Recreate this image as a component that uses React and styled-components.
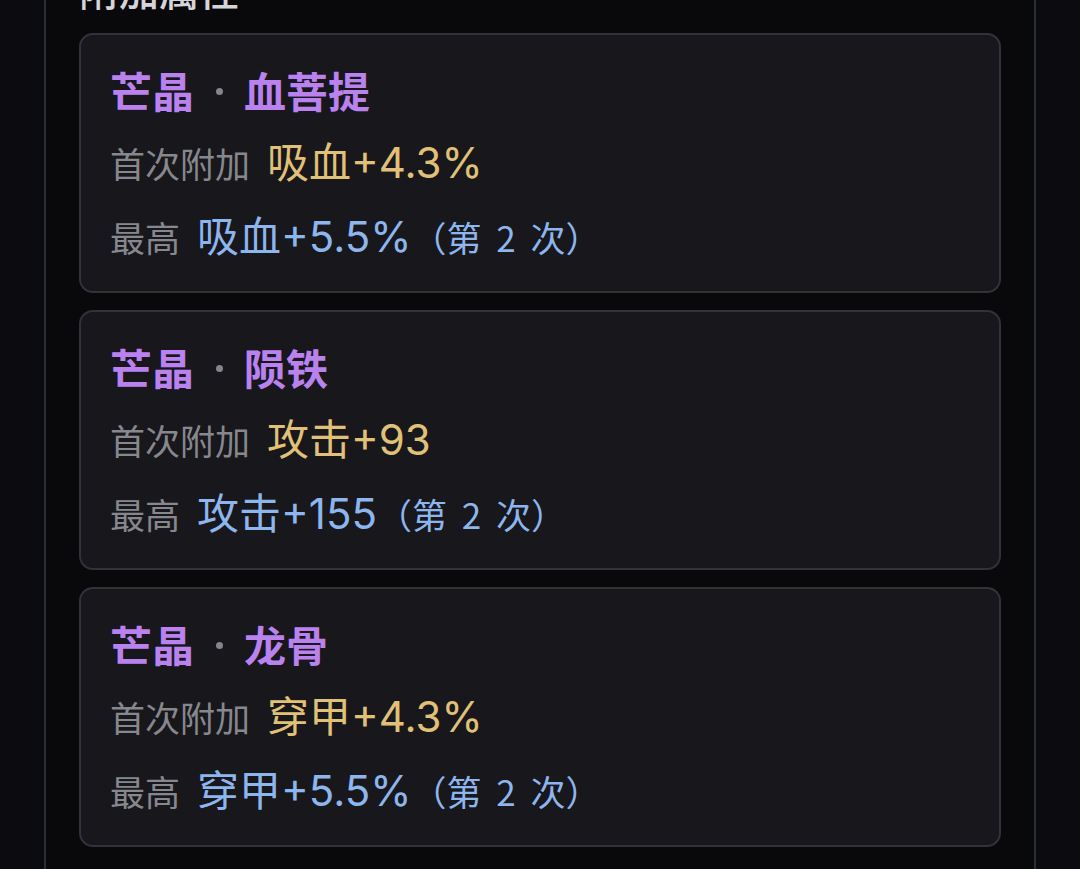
import React from "react";
import styled, { createGlobalStyle } from "styled-components";

const Global = createGlobalStyle`
  html, body {
    margin: 0;
    padding: 0;
    background: #0c0c10;
    overflow: hidden;
  }
  body {
    font-family: "Inter", "Noto Sans CJK SC", sans-serif;
  }
`;

const Panel = styled.section`
  margin: -38px 44px 0;
  min-height: 960px;
  border-left: 2px solid #2c2e35;
  border-right: 2px solid #2c2e35;
  background: #09090c;
  padding: 0 33px;
  display: flex;
  flex-direction: column;
`;

const Heading = styled.h2`
  margin: 0 0 17px;
  font-size: 40px;
  line-height: 54px;
  font-weight: 500;
  color: #d4d4da;
  font-family: "Noto Sans CJK SC", sans-serif;
`;

const List = styled.div`
  display: flex;
  flex-direction: column;
  gap: 17px;
`;

const Card = styled.article`
  background: #17171c;
  border: 2px solid #31323a;
  border-radius: 14px;
  padding: 27px 29px 17px;
`;

const Title = styled.div`
  display: flex;
  align-items: center;
  height: 56px;
  font-family: "Noto Sans CJK SC", sans-serif;
  font-size: 42px;
  line-height: 56px;
  font-weight: 700;
  color: #b982ef;
  margin-bottom: 8px;
`;

const Dot = styled.span`
  width: 7px;
  height: 7px;
  border-radius: 50%;
  background: #85858b;
  margin: 2px 21px 0 22px;
`;

const Row = styled.div`
  display: flex;
  align-items: baseline;
  height: 74px;
  line-height: 74px;
`;

const Label = styled.span`
  font-family: "Noto Sans CJK SC", sans-serif;
  font-size: 35px;
  color: #87878e;
  margin-right: 17px;
`;

const Value = styled.span`
  font-size: 42px;
  color: ${(p) => (p.$tone === "max" ? "#8db5ee" : "#e0c177")};
`;

const Note = styled.span`
  font-size: 35px;
  color: #8db5ee;
  font-family: "Noto Sans CJK SC", sans-serif;
  word-spacing: 7px;
`;

const items = [
  { name: "血菩提", first: "吸血+4.3%", max: "吸血+5.5%", times: 2 },
  { name: "陨铁", first: "攻击+93", max: "攻击+155", times: 2 },
  { name: "龙骨", first: "穿甲+4.3%", max: "穿甲+5.5%", times: 2 },
];

export default function App() {
  return (
    <>
      <Global />
      <Panel>
        <Heading>附加属性</Heading>
        <List>
          {items.map((it) => (
            <Card key={it.name}>
              <Title>
                <span>芒晶</span>
                <Dot aria-hidden="true" />
                <span>{it.name}</span>
              </Title>
              <Row>
                <Label>首次附加</Label>
                <Value>{it.first}</Value>
              </Row>
              <Row>
                <Label>最高</Label>
                <Value $tone="max">{it.max}</Value>
                <Note>（第 {it.times} 次）</Note>
              </Row>
            </Card>
          ))}
        </List>
      </Panel>
    </>
  );
}
